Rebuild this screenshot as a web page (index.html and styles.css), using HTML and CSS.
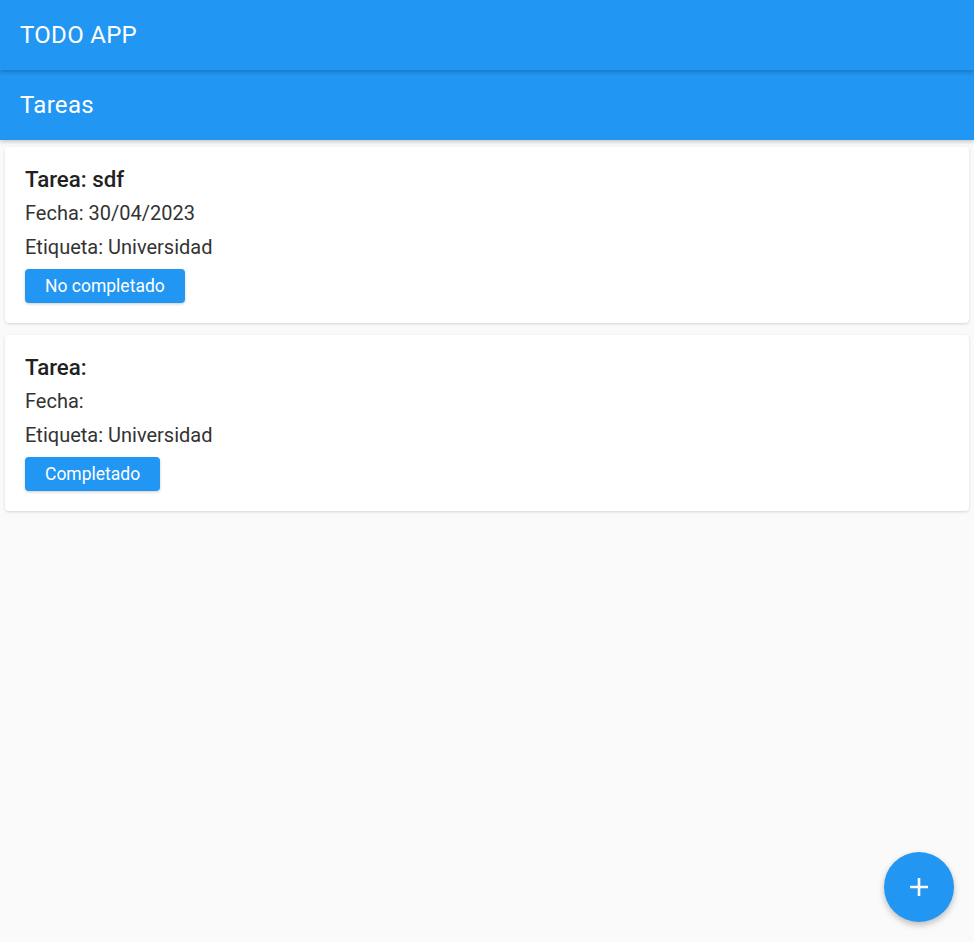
FILE: index.html
```html
<!DOCTYPE html>
<html lang="es">
<head>
<meta charset="utf-8">
<title>TODO APP</title>
<link rel="stylesheet" href="styles.css">
</head>
<body>
<header class="appbar appbar-main">TODO APP</header>
<div class="appbar appbar-sub">Tareas</div>
<main class="list">
  <section class="card">
    <h2 class="card-title">Tarea: sdf</h2>
    <p class="card-line">Fecha: 30/04/2023</p>
    <p class="card-line">Etiqueta: Universidad</p>
    <button class="status-btn">No completado</button>
  </section>
  <section class="card">
    <h2 class="card-title">Tarea:</h2>
    <p class="card-line">Fecha:</p>
    <p class="card-line">Etiqueta: Universidad</p>
    <button class="status-btn">Completado</button>
  </section>
</main>
<button class="fab" aria-label="Agregar">
  <svg width="22" height="22" viewBox="0 0 22 22"><path d="M11 2v18M2 11h18" stroke="#fff" stroke-width="2.6" fill="none"/></svg>
</button>
</body>
</html>
```
FILE: styles.css
```css
html, body {
  margin: 0;
  padding: 0;
  height: 100%;
}
body {
  background: #fafafa;
  font-family: Roboto, "Liberation Sans", sans-serif;
  color: #212121;
}
.appbar {
  height: 70px;
  box-sizing: border-box;
  padding-left: 20px;
  display: flex;
  align-items: center;
  background: #2196f3;
  color: #fff;
  font-size: 24px;
  letter-spacing: 0.3px;
  position: relative;
}
.appbar-main {
  z-index: 2;
  box-shadow: 0 2px 4px rgba(0,0,0,0.22);
}
.appbar-sub {
  z-index: 1;
  box-shadow: 0 2px 4px rgba(0,0,0,0.2);
}
.list {
  padding: 7px 5px;
  display: flex;
  flex-direction: column;
  gap: 12px;
}
.card {
  background: #fff;
  border-radius: 4px;
  box-shadow: 0 1px 3px rgba(0,0,0,0.15);
  padding: 20px 20px 20px 20px;
  display: flex;
  flex-direction: column;
  align-items: flex-start;
  gap: 10px;
}
.card-title {
  margin: 0;
  font-size: 22.3px;
  font-weight: 500;
  line-height: 24px;
  color: #212121;
}
.card-line {
  margin: 0;
  font-size: 20px;
  line-height: 24px;
  color: #333;
}
.status-btn {
  height: 34px;
  border: none;
  border-radius: 4px;
  background: #2196f3;
  color: #fff;
  font-family: Roboto, "Liberation Sans", sans-serif;
  font-size: 17.5px;
  padding: 0 20px;
  box-shadow: 0 1px 3px rgba(0,0,0,0.2);
}
.fab {
  position: fixed;
  right: 20px;
  bottom: 20px;
  width: 70px;
  height: 70px;
  border-radius: 50%;
  border: none;
  background: #2196f3;
  box-shadow: 0 3px 6px rgba(0,0,0,0.25);
  display: flex;
  align-items: center;
  justify-content: center;
  padding: 0;
}
```
